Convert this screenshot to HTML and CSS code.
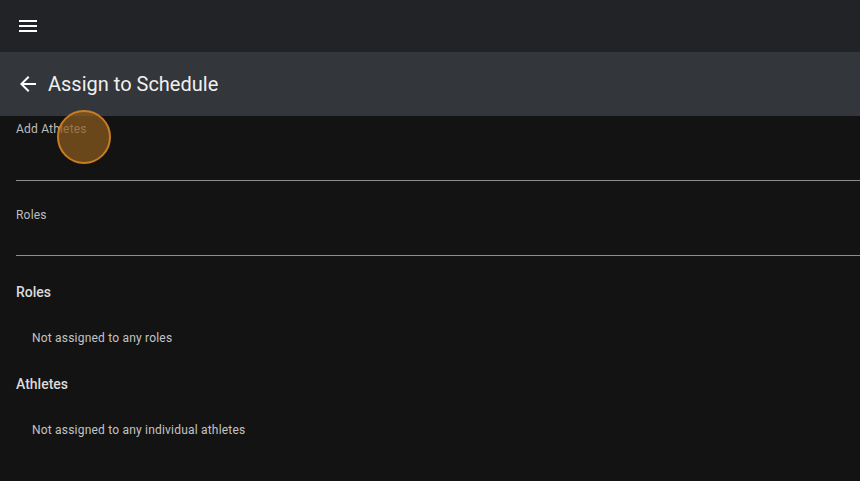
FILE: index.html
```html
<!DOCTYPE html>
<html>
<head>
<meta charset="utf-8">
<link rel="stylesheet" href="styles.css">
</head>
<body>
<header class="topbar">
  <svg class="icon menu" viewBox="0 0 24 24" width="24" height="24"><path d="M3 6h18v2H3zM3 11h18v2H3zM3 16h18v2H3z" fill="#fff"/></svg>
</header>
<div class="titlebar">
  <svg class="icon back" viewBox="0 0 24 24" width="24" height="24"><path d="M20 11H7.83l5.59-5.59L12 4l-8 8 8 8 1.41-1.41L7.83 13H20v-2z" fill="#fff"/></svg>
  <h1 class="title">Assign to Schedule</h1>
</div>
<main class="content">
  <div class="field field-first">
    <label class="field-label">Add Athletes</label>
    <div class="touch"></div>
  </div>
  <div class="field field-second">
    <label class="field-label">Roles</label>
  </div>
  <section class="group">
    <h2 class="group-title">Roles</h2>
    <p class="group-item">Not assigned to any roles</p>
  </section>
  <section class="group">
    <h2 class="group-title">Athletes</h2>
    <p class="group-item">Not assigned to any individual athletes</p>
  </section>
</main>
</body>
</html>
```
FILE: styles.css
```css
html, body {
  margin: 0;
  padding: 0;
  background: #131313;
  font-family: Roboto, "Noto Sans", sans-serif;
  width: 860px;
  height: 481px;
  overflow: hidden;
}
.topbar {
  height: 52px;
  background: #222327;
  display: flex;
  align-items: center;
  padding-left: 16px;
}
.icon { display: block; }
.titlebar {
  height: 64px;
  background: #33363b;
  display: flex;
  align-items: center;
  padding-left: 16px;
}
.back { margin-right: 8px; }
.title {
  margin: 0;
  font-size: 20px;
  font-weight: 400;
  color: #f0f0f0;
  letter-spacing: 0;
}
.content {
  padding-left: 16px;
}
.field {
  position: relative;
  border-bottom: 1px solid #8d8d8d;
}
.field-first { height: 64px; }
.field-second { height: 74px; }
.field-label {
  display: block;
  font-size: 12px;
  color: #bdbdbd;
  letter-spacing: 0.2px;
  line-height: 14px;
}
.field-first .field-label { padding-top: 6px; }
.field-second .field-label { padding-top: 27px; }
.touch {
  position: absolute;
  left: 41px;
  top: -6px;
  width: 50px;
  height: 50px;
  border-radius: 50%;
  background: rgba(140, 90, 30, 0.72);
  border: 2px solid #c87d22;
}
.group-title {
  margin: 0;
  font-size: 14px;
  font-weight: 500;
  color: #dcdcdc;
  line-height: 16px;
  padding-top: 28px;
}
.group-item {
  margin: 0;
  font-size: 12px;
  color: #c4c4c4;
  padding-left: 16px;
  line-height: 14px;
  letter-spacing: 0.2px;
  padding-top: 31px;
}
.group + .group .group-title { padding-top: 31px; }
```
